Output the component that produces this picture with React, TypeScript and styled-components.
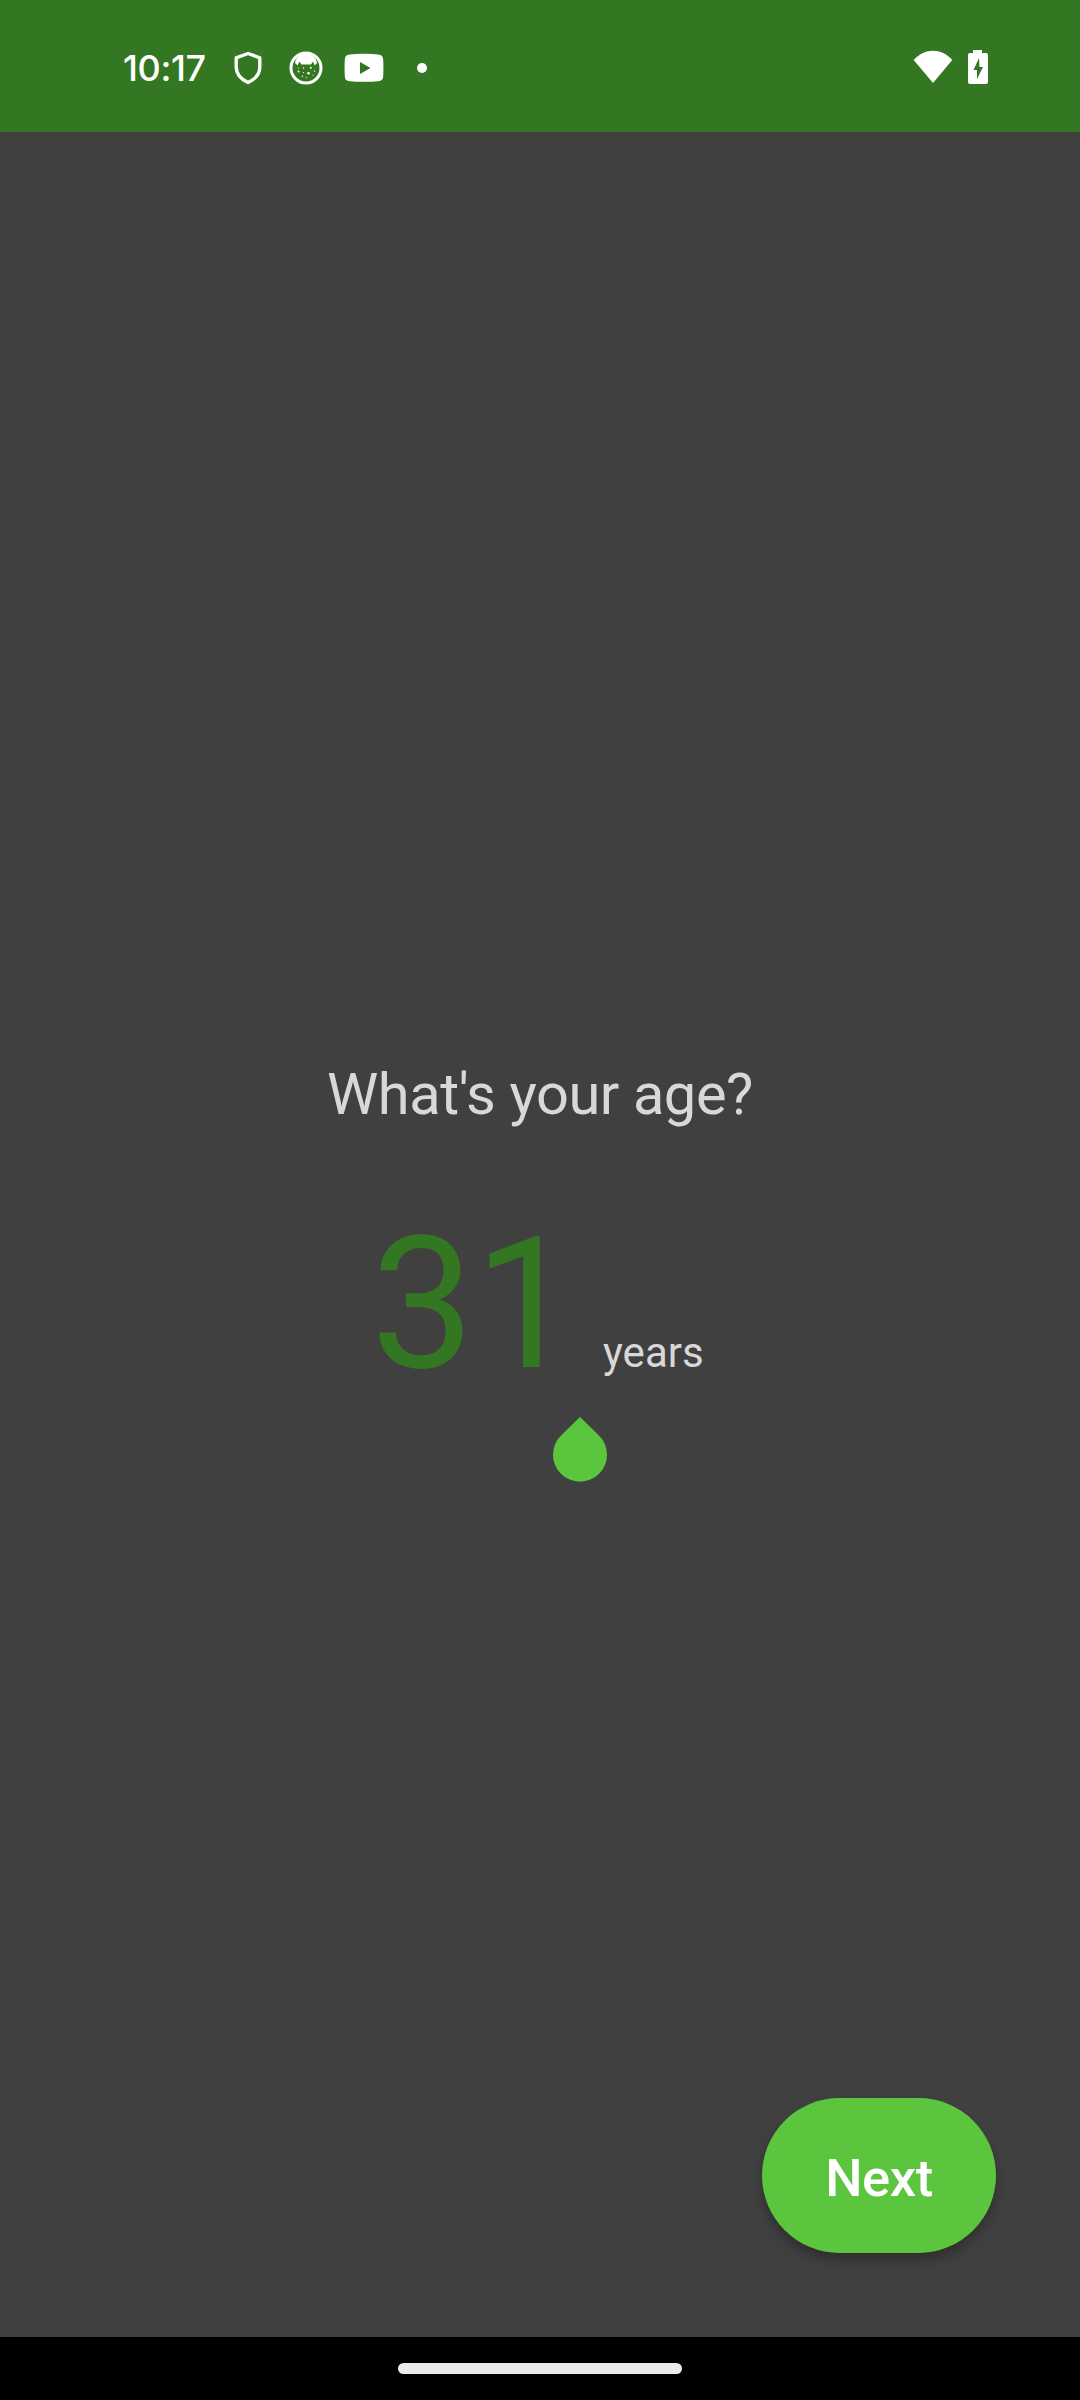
import React from 'react';
import styled, { createGlobalStyle } from 'styled-components';

const GlobalStyle = createGlobalStyle`
  * { box-sizing: border-box; }
  body { margin: 0; background: #404040; }
`;

const Screen = styled.div`
  display: flex;
  flex-direction: column;
  width: 1080px;
  height: 2400px;
  background: #404040;
  font-family: Roboto, sans-serif;
  overflow: hidden;
`;

const StatusBar = styled.header`
  display: flex;
  justify-content: space-between;
  height: 132px;
  padding: 0 91px 0 123px;
  background: #337722;
  color: #fff;
`;

const StatusGroup = styled.div<{ $gap?: number; $height?: number }>`
  display: flex;
  align-items: center;
  height: ${(p) => p.$height ?? 136}px;
  gap: ${(p) => p.$gap ?? 0}px;
`;

const Clock = styled.span`
  width: 108px;
  padding-bottom: 1px;
  font: 500 36px/40px Inter, sans-serif;
  letter-spacing: -0.4px;
  white-space: nowrap;
`;

const Glyph = styled.svg<{ $after?: number }>`
  display: block;
  flex: none;
  margin-right: ${(p) => p.$after ?? 0}px;
`;

const Dot = styled.span`
  width: 10px;
  height: 10px;
  border-radius: 50%;
  background: #fff;
`;

const Content = styled.main`
  display: flex;
  flex-direction: column;
  align-items: center;
  flex: 1;
  padding: 928px 84px 84px;
`;

const Question = styled.h1`
  margin: 0;
  color: #d8d8d8;
  font-size: 57.75px;
  font-weight: 400;
  line-height: 68px;
  letter-spacing: -0.42px;
  white-space: nowrap;
`;

const AgeRow = styled.div`
  display: flex;
  align-items: baseline;
  align-self: flex-start;
  margin: 69px 0 0 287px;
`;

const Age = styled.span`
  width: 232px;
  color: #337722;
  font-size: 183.75px;
  line-height: 216px;
`;

const Unit = styled.span`
  color: #d8d8d8;
  font-size: 42px;
  line-height: 50px;
`;

const CaretHandle = styled.div`
  display: flex;
  align-self: flex-start;
  margin: 3px 0 0 468px;
`;

const NextButton = styled.button`
  align-self: flex-end;
  width: 234px;
  height: 155px;
  margin: auto 0 0;
  padding: 4px 0 0;
  border: 0;
  border-radius: 78px;
  background: #5ac53d;
  color: #fff;
  font: 500 52.5px/62px Roboto, sans-serif;
  letter-spacing: -0.4px;
  box-shadow: 0 7px 11px rgba(0, 0, 0, 0.28);
`;

const NavigationBar = styled.footer`
  display: flex;
  justify-content: center;
  height: 63px;
  padding-top: 26px;
  background: #000;
`;

const HomeIndicator = styled.span`
  width: 284px;
  height: 11px;
  border-radius: 5.5px;
  background: #ebebeb;
`;

export default function App() {
  return (
    <Screen>
      <GlobalStyle />
      <StatusBar>
        <StatusGroup>
          <Clock>10:17</Clock>
          <Glyph width="34" height="34" viewBox="0 0 34 34" $after={24}>
            <path d="M17 2.5 L28.8 6.8 V16 C28.8 23 23.5 28.5 17 31.5 C10.5 28.5 5.2 23 5.2 16 V6.8 Z" fill="none" stroke="#fff" strokeWidth="3.4" strokeLinejoin="round" />
          </Glyph>
          <Glyph width="34" height="34" viewBox="0 0 34 34" $after={21}>
            <circle cx="17" cy="17" r="15" fill="none" stroke="#fff" strokeWidth="3" />
            <path d="M6 12 C7 6 12 2.5 17 2.5 C22 2.5 27 6 28 12 L25.7 14.5 L24 10.5 L22 13.5 H12.5 L10.5 10.5 L8.6 14.5 Z" fill="#fff" />
            <g fill="#fff">
              <circle cx="9.5" cy="20.5" r="1" />
              <circle cx="14.5" cy="17" r=".7" />
              <circle cx="19.5" cy="22.3" r="1.3" />
              <circle cx="21.8" cy="16.8" r="1" />
              <circle cx="13.5" cy="25.2" r=".7" />
              <circle cx="25.5" cy="20" r=".7" />
              <circle cx="17.2" cy="26.6" r=".6" />
              <circle cx="14.5" cy="21.5" r=".6" />
              <circle cx="24" cy="24" r=".6" />
              <circle cx="9.3" cy="17" r=".6" />
            </g>
          </Glyph>
          <Glyph width="40" height="30" viewBox="0 0 40 30" $after={33}>
            <path fillRule="evenodd" d="M6 1.5 C13 .6 27 .6 34 1.5 C37.8 2 39.1 3.5 39.2 7 C39.5 12 39.5 18 39.2 23 C39.1 26.5 37.8 27.8 34 28.2 C27 29 13 29 6 28.2 C2.2 27.8 .9 26.5 .8 23 C.5 18 .5 12 .8 7 C.9 3.5 2.2 2 6 1.5 Z M16 9 V21 L26.5 15 Z" fill="#fff" />
          </Glyph>
          <Dot />
        </StatusGroup>
        <StatusGroup $gap={14} $height={134}>
          <Glyph width="40" height="34" viewBox="0 0 40 34">
            <path d="M.7 10 C12 -2.2 28 -2.2 39.3 10 L20 33 Z" fill="#fff" />
          </Glyph>
          <Glyph width="22" height="34" viewBox="0 0 22 34">
            <path fillRule="evenodd" d="M6 0 H15 V3 H19 Q21 3 21 5 V32 Q21 34 19 34 H3 Q1 34 1 32 V5 Q1 3 3 3 H6 Z M12 8 L6.5 20 H10 V29 L16 17 H12.5 Z" fill="#fff" />
          </Glyph>
        </StatusGroup>
      </StatusBar>
      <Content>
        <Question>What's your age?</Question>
        <AgeRow>
          <Age>31</Age>
          <Unit>years</Unit>
        </AgeRow>
        <CaretHandle>
          <Glyph width="56" height="66" viewBox="0 0 56 66">
            <path d="M28 1 L47 19.5 A27 27 0 1 1 9 19.5 Z" fill="#5ac53d" />
          </Glyph>
        </CaretHandle>
        <NextButton>Next</NextButton>
      </Content>
      <NavigationBar>
        <HomeIndicator />
      </NavigationBar>
    </Screen>
  );
}
